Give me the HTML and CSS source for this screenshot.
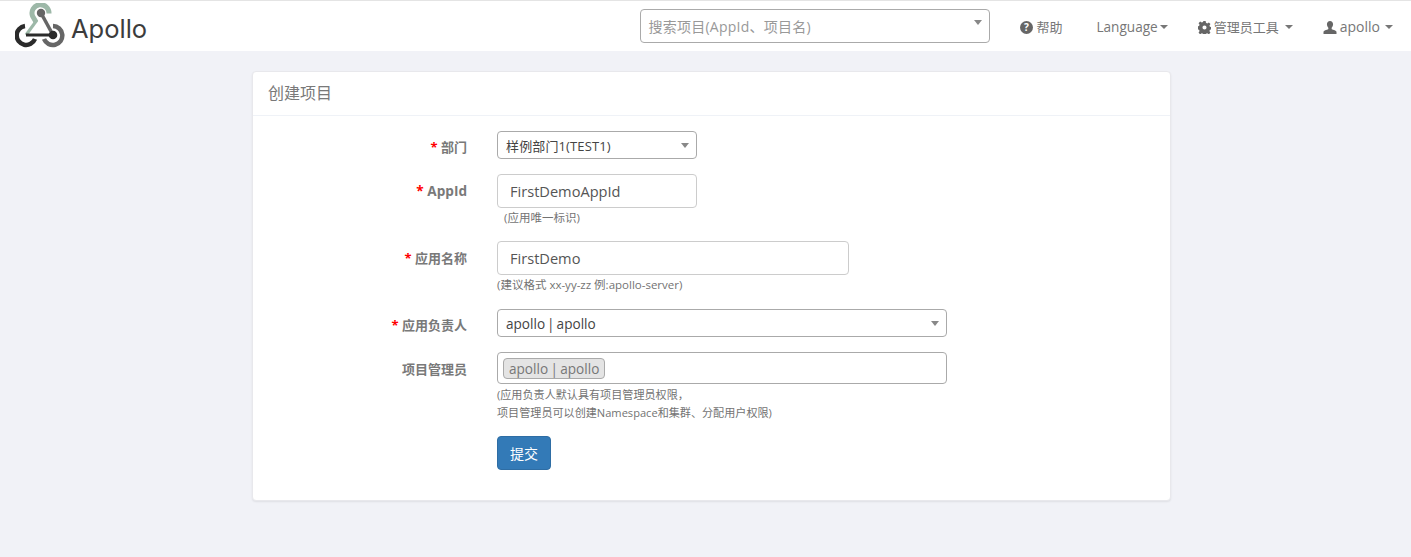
FILE: index.html
```html
<!DOCTYPE html>
<html lang="zh-CN">
<head>
<meta charset="utf-8">
<title>Apollo</title>
<link rel="stylesheet" href="styles.css">
</head>
<body>
<nav class="navbar">
  <a class="brand">
    <svg class="logo" width="50" height="46" viewBox="14 3 50 46" fill="none">
      <path d="M48 13.500 A8.500 8.500 0 1 0 31.500 16 L35 22" stroke="#9db8a8" stroke-width="5"/>
      <path d="M36 20 L25 35" stroke="#9db8a8" stroke-width="3"/>
      <path d="M40 13 L52 35" stroke="#666" stroke-width="3.500"/>
      <circle cx="40" cy="13" r="4.200" fill="#666"/>
      <path d="M25 35 L52 35" stroke="#2b2b2b" stroke-width="3"/>
      <circle cx="52" cy="35" r="4.300" fill="#2b2b2b"/>
      <path d="M24 26 A9.500 9.500 0 1 0 34 39" stroke="#2b2b2b" stroke-width="4.500"/>
      <path d="M52 26 A9.500 9.500 0 1 1 43 39" stroke="#666" stroke-width="4.500"/>
    </svg>
    <span class="brand-text">Apollo</span>
  </a>
  <div class="nav-right">
    <div class="search">
      <span class="search-text">搜索项目(AppId、项目名)</span>
      <span class="search-caret"></span>
    </div>
    <a class="nav-item nav-help">
      <svg class="ico" width="13" height="13" viewBox="0 0 14 14"><circle cx="7" cy="7" r="7" fill="#666"/><text x="7" y="11" text-anchor="middle" class="ico-q">?</text></svg>
      帮助
    </a>
    <a class="nav-item nav-lang">Language<span class="caret"></span></a>
    <a class="nav-item nav-admin">
      <svg class="ico" width="13" height="13" viewBox="0 0 14 14"><path fill="#666" fill-rule="evenodd" d="M5.800 0h2.400l.4 2 1.300.6 1.800-1.100 1.700 1.700-1.100 1.800.6 1.300 2 .4v2.400l-2 .4-.6 1.300 1.100 1.800-1.700 1.700-1.800-1.100-1.300.6-.4 2H5.800l-.4-2-1.300-.6-1.800 1.100-1.700-1.700 1.100-1.800-.6-1.300-2-.4V5.800l2-.4.6-1.300-1.100-1.800 1.700-1.700 1.800 1.100 1.300-.6zM7 4.800a2.200 2.200 0 1 0 0 4.400 2.200 2.200 0 0 0 0-4.400z"/></svg>
      管理员工具<span class="caret caret-admin"></span>
    </a>
    <a class="nav-item nav-user">
      <svg class="ico" width="14" height="13" viewBox="0 0 14 14"><path fill="#666" d="M7 0c2 0 3.300 1.500 3.300 3.600 0 1.500-.7 3-1.500 3.800v1.200c0 .7 4.700 1.200 5.200 3V14H0v-2.400c.5-1.800 5.200-2.300 5.200-3V7.400C4.400 6.600 3.700 5.100 3.700 3.600 3.700 1.500 5 0 7 0z"/></svg>
      apollo<span class="caret caret-gap"></span>
    </a>
  </div>
</nav>

<main class="panel">
  <header class="panel-head">创建项目</header>
  <form class="form">
    <div class="row row-dept">
      <label class="lab lab-sel"><span class="req">*</span> 部门</label>
      <div class="sel sel-dept"><span>样例部门1(TEST1)</span><i class="sel-caret"></i></div>
    </div>
    <div class="row row-appid">
      <label class="lab"><span class="req">*</span> AppId</label>
      <div class="field">
        <div class="inp inp-appid">FirstDemoAppId</div>
        <p class="help help-indent">(应用唯一标识)</p>
      </div>
    </div>
    <div class="row row-name">
      <label class="lab"><span class="req">*</span> 应用名称</label>
      <div class="field">
        <div class="inp inp-name">FirstDemo</div>
        <p class="help">(建议格式 xx-yy-zz 例:apollo-server)</p>
      </div>
    </div>
    <div class="row row-owner">
      <label class="lab lab-sel"><span class="req">*</span> 应用负责人</label>
      <div class="sel sel-owner"><span>apollo | apollo</span><i class="sel-caret"></i></div>
    </div>
    <div class="row row-admins">
      <label class="lab">项目管理员</label>
      <div class="field">
        <div class="multi"><span class="chip">apollo | apollo</span></div>
        <p class="help help-multi">(应用负责人默认具有项目管理员权限，<br>项目管理员可以创建Namespace和集群、分配用户权限)</p>
      </div>
    </div>
    <div class="row">
      <span class="lab"></span>
      <button type="button" class="btn">提交</button>
    </div>
  </form>
</main>
</body>
</html>
```
FILE: styles.css
```css
* { box-sizing: border-box; }
html, body { margin: 0; padding: 0; }
body {
  height: 557px;
  overflow: hidden;
  background: #f1f2f7;
  color: #797979;
  font-family: "Open Sans", "Noto Sans CJK SC", sans-serif;
  font-size: 13px;
}
.navbar {
  height: 51px;
  background: #fff;
  border-top: 1px solid #e4e4e4;
  display: flex;
  align-items: center;
  justify-content: space-between;
}
.brand { display: flex; align-items: center; margin-left: 15px; }
.logo { display: block; }
.brand-text {
  font-family: "Inter", "Open Sans", sans-serif;
  font-size: 25.5px;
  line-height: 30px;
  color: #3c3c3c;
  margin: 5px 0 0 6px;
}
.nav-right { display: flex; align-items: center; }
.search {
  width: 350px;
  height: 34px;
  border: 1px solid #aaa;
  border-radius: 4px;
  display: flex;
  align-items: center;
  justify-content: space-between;
  padding: 0 8px 0 7px;
  margin-right: 30px;
}
.search-text { color: #999; font-size: 14px; letter-spacing: .25px; line-height: 20px; margin-top: 2px; }
.search-caret {
  width: 0; height: 0;
  border-left: 4px solid transparent;
  border-right: 4px solid transparent;
  border-top: 5px solid #888;
  margin: -8px -1px 0 0;
}
.nav-item {
  display: flex;
  align-items: center;
  color: #777;
  font-size: 13px;
  line-height: 20px;
  margin-top: 2px;
}
.ico { margin-right: 3px; }
.ico-q { font: bold 11px "Open Sans", sans-serif; fill: #fff; }
.nav-help { margin-right: 34px; }
.nav-lang { margin-right: 30px; font-size: 13.6px; }
.nav-admin { margin-right: 30px; }
.nav-user { margin-right: 18px; font-size: 14px; }
.caret {
  width: 0; height: 0;
  border-left: 4px solid transparent;
  border-right: 4px solid transparent;
  border-top: 4px solid #777;
  margin-left: 2px;
}
.caret-gap { margin-left: 5px; }
.caret-admin { margin-left: 6px; }
.panel {
  width: 919px;
  height: 430px;
  margin: 20px 0 0 252px;
  background: #fff;
  border-radius: 4px;
  border: 1px solid #e8e8ec;
  box-shadow: 0 1px 2px rgba(0,0,0,.08);
}
.panel-head {
  height: 44px;
  padding: 0 15px;
  font-size: 16px;
  line-height: 43px;
  color: #797979;
  border-bottom: 1px solid #eff2f7;
}
.form { padding-top: 15px; }
.row { display: flex; align-items: flex-start; margin-bottom: 15px; }
.lab {
  width: 214px;
  margin-right: 30px;
  text-align: right;
  font-weight: 700;
  font-size: 13px;
  line-height: 20px;
  padding-top: 7px;
  color: #797979;
}
.lab-sel { padding-top: 6px; }
.row-appid .lab { font-size: 13.6px; }
.req { color: #f00; }
.sel {
  height: 28px;
  border: 1px solid #aaa;
  border-radius: 4px;
  padding: 0 8px;
  display: flex;
  align-items: center;
  justify-content: space-between;
  color: #444;
  font-size: 13px;
  letter-spacing: .13px;
}
.sel-dept { width: 200px; }
.sel-owner { width: 450px; font-size: 13.6px; letter-spacing: 0; word-spacing: -1.5px; }
.sel-caret {
  width: 0; height: 0;
  border-left: 4px solid transparent;
  border-right: 4px solid transparent;
  border-top: 5px solid #888;
  margin-right: -1px;
}
.inp {
  height: 34px;
  border: 1px solid #ccc;
  border-radius: 4px;
  padding: 0 12px;
  font-size: 14.6px;
  line-height: 32px;
  color: #555;
}
.inp-appid { width: 200px; }
.inp-name { width: 352px; }
.help { margin: 2px 0 0; font-size: 11.5px; line-height: 16px; color: #737373; }
.help-indent { padding-left: 7px; }
.row-appid { margin-bottom: 15px; }
.row-name { margin-bottom: 16px; }
.multi {
  width: 450px;
  height: 32px;
  border: 1px solid #aaa;
  border-radius: 4px;
  padding: 5px;
}
.chip {
  display: inline-block;
  height: 21px;
  border: 1px solid #aaa;
  border-radius: 4px;
  background: #e4e4e4;
  padding: 0 5px;
  font-size: 13.6px;
  word-spacing: -1.2px;
  line-height: 20px;
  color: #777;
}
.help-multi { font-size: 11.1px; line-height: 18px; }
.row-admins { margin-bottom: 14px; }
.btn {
  width: 54px;
  height: 34px;
  border: 1px solid #2e6da4;
  border-radius: 4px;
  background: #337ab7;
  color: #fff;
  font: 14px "Open Sans", "Noto Sans CJK SC", sans-serif;
}
```
